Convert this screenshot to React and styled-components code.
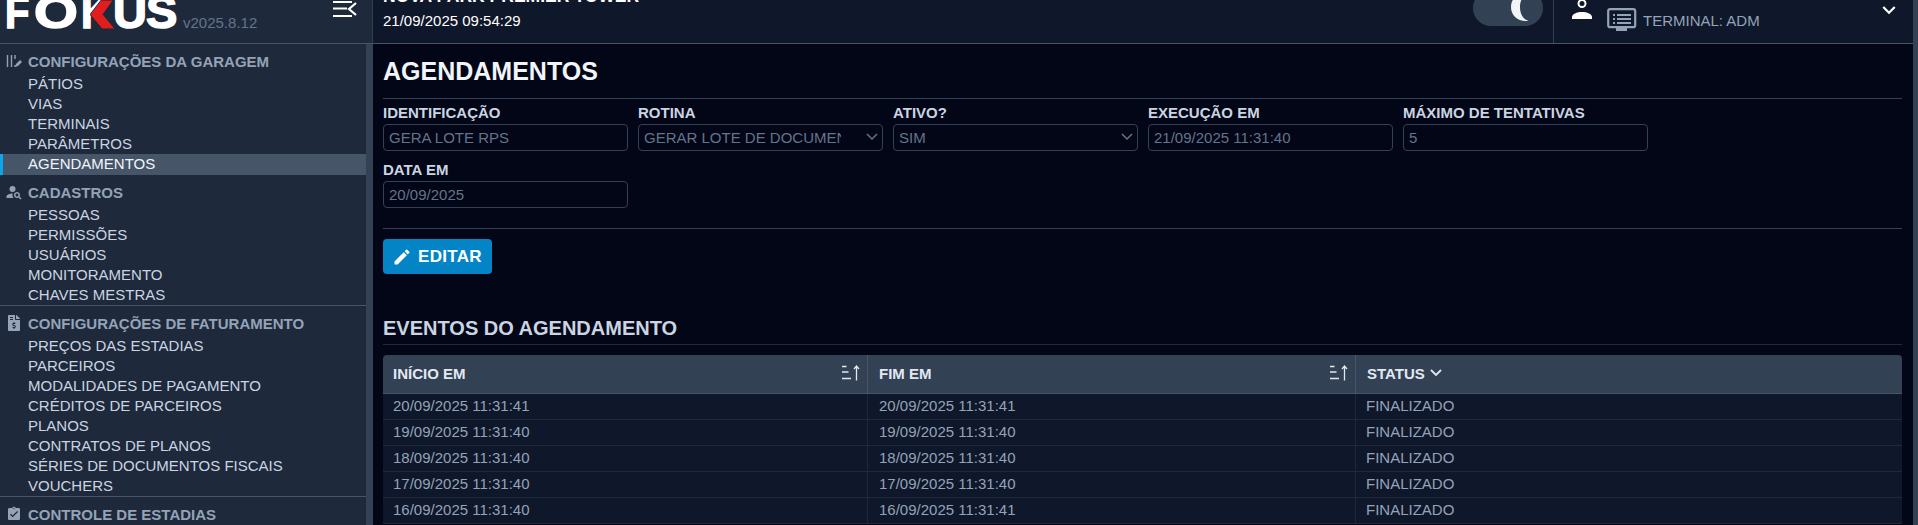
import React from "react";
import styled, { createGlobalStyle } from "styled-components";
import { MdPersonSearch, MdAssignmentTurnedIn, MdEdit, MdExpandMore } from "react-icons/md";
import { FaFileInvoiceDollar } from "react-icons/fa";

const Global = createGlobalStyle`
  html, body { margin: 0; padding: 0; height: 525px; overflow: hidden; background: #020617; }
  * { box-sizing: border-box; }
  body { font-family: "Liberation Sans", Arial, sans-serif; font-size: 15px; }
`;

const Shell = styled.div`
  width: 1918px; height: 525px; display: grid; grid-template-columns: 1913px 5px; overflow: hidden;
`;
const PageScroll = styled.div`background: #334155;`;
const Frame = styled.div`
  display: grid; grid-template-columns: 373px 1fr; grid-template-rows: 44px 1fr; height: 525px; overflow: hidden;
`;
const Brand = styled.div`
  background: #1e293b; border-bottom: 1px solid #475569; border-right: 1px solid #334155;
  display: flex; align-items: flex-end; padding: 0 0 14px 5px; overflow: hidden; position: relative; height: 44px;
`;
const LogoMark = styled.div`
  display: flex; align-items: flex-end; height: 29px; width: 172px; flex: none; position: relative;
`;
const LogoLetter = styled.span`
  display: block; flex: none; width: ${p => p.$w}px; height: 29px;
  font: 700 47px/29px "Liberation Sans", sans-serif; color: #fff; -webkit-text-stroke: 1.6px #fff;
  transform: translateY(-2.6px) scaleX(${p => p.$sx}); transform-origin: left bottom;
`;
const Chevron = styled.svg`position: absolute; left: 85px; top: 0; width: 26px; height: 29px;`;
const Version = styled.span`
  color: #64748b; font-size: 15px; margin-left: 6px; line-height: 16px; margin-bottom: -2px;
`;
const Collapse = styled.svg`position: absolute; right: 15px; top: 0; width: 24px; height: 18px;`;
const TopBar = styled.header`
  background: #0f172a; border-bottom: 1px solid #475569; display: flex; align-items: flex-start; padding-left: 10px; height: 44px; overflow: hidden;
`;
const Place = styled.div`
  color: #fff; font-size: 15px; line-height: 17px; margin-top: -14px; flex: 1;
  b { display: block; font-weight: 700; font-size: 17.5px; margin-bottom: 6px; line-height: 20px; }
`;
const Toggle = styled.div`
  width: 70px; height: 36px; margin-top: -10px; border-radius: 18px; background: #334155; position: relative; flex: none;
`;
const Moon = styled.svg`position: absolute; right: 12px; top: 3px; width: 22px; height: 28px;`;
const UserBox = styled.div`
  margin-left: 10px; width: 360px; height: 43px; border-left: 1px solid #334155; display: flex; align-items: flex-start; padding-left: 17px; flex: none; position: relative;
`;
const PersonIcon = styled.svg`width: 24px; height: 20px; flex: none;`;
const Terminal = styled.div`
  display: flex; align-items: center; gap: 6px; color: #94a3b8; margin: 8px 0 0 12px; font-size: 15px;
`;
const Caret = styled(MdExpandMore)`position: absolute; right: 11px; top: -3px; color: #fff;`;

const SideWrap = styled.aside`
  background: #1e293b; border-right: 7px solid #334155; overflow: hidden; height: 481px;
`;
const Group = styled.section`
  padding-top: 8px; border-bottom: ${p => p.$line ? "1px solid #475569" : "none"};
`;
const GroupTitle = styled.div`
  display: flex; align-items: center; height: 20px; padding: 0 0 2px 6px; color: #94a3b8; font-weight: 700; font-size: 15px; margin-bottom: 2px; white-space: nowrap;
  svg { width: 16px; height: 16px; flex: none; margin-right: 6px; color: #94a3b8; }
`;
const PersonSearch = styled(MdPersonSearch)`
  && { width: 18px; height: 18px; margin: 0 5px 0 -1px; }
`;
const Item = styled.a`
  display: flex; align-items: center; height: ${p => p.$active ? 21 : 20}px; padding: 0 0 2px 28px; color: ${p => p.$active ? "#f1f5f9" : "#cbd5e1"}; font-size: 15px;
  background: ${p => p.$active ? "#475569" : "transparent"};
  border-left: ${p => p.$active ? "3px solid #0ea5e9" : "none"};
  ${p => p.$active ? "padding-left: 25px;" : ""}
`;

const Main = styled.main`
  background: #020617; padding: 0 11px 0 10px; overflow: hidden; height: 481px;
`;
const H1 = styled.h1`
  margin: 0; padding-top: 12px; height: 55px; font-size: 25px; line-height: 30px; font-weight: 700; color: #f1f5f9; border-bottom: 1px solid #334155;
`;
const FormGrid = styled.div`
  display: grid; grid-template-columns: repeat(5, 245px); column-gap: 10px; row-gap: 10px; padding-top: 5px;
`;
const Field = styled.label`display: flex; flex-direction: column;`;
const Label = styled.span`
  color: #cbd5e1; font-weight: 700; font-size: 15px; line-height: 18px; margin-bottom: 2px; height: 18px;
`;
const Input = styled.div`
  height: 27px; border: 1px solid #334155; border-radius: 4px; background: #020617; color: #64748b; font-size: 15px;
  padding: 0 ${p => p.$select ? 41 : 6}px 0 5px;
  display: flex; align-items: center; position: relative; white-space: nowrap; overflow: hidden;
`;
const InputText = styled.span`overflow: hidden; display: block; flex: 1;`;
const SelectArrow = styled.svg`position: absolute; right: 4px; top: 8px; width: 12px; height: 8px; fill: none; stroke: #64748b; stroke-width: 1.5;`;
const Rule = styled.hr`
  border: 0; border-top: 1px solid #334155; margin: 20px 0 10px;
`;
const EditButton = styled.button`
  width: 109px; height: 35px; background: #0284c7; color: #fff; border: 0; border-radius: 4px; font: 700 17px "Liberation Sans", sans-serif; letter-spacing: .3px;
  display: flex; align-items: center; padding: 0 0 0 9px; gap: 6px;
`;
const H2 = styled.h2`
  margin: 42px 0 0; height: 29px; font-size: 20px; line-height: 24px; font-weight: 700; color: #cbd5e1; border-bottom: 1px solid #1e293b;
`;
const Table = styled.div`
  margin-top: 10px; border-radius: 4px 4px 0 0; overflow: hidden; width: 1519px; font-size: 15px;
`;
const Row = styled.div`
  display: grid; grid-template-columns: 485px 488px 1fr; height: ${p => p.$head ? 39 : 26}px;
  background: ${p => p.$head ? "#334155" : "#0f172a"};
  border-bottom: 1px solid ${p => p.$head ? "#475569" : "#1e293b"};
`;
const Cell = styled.div`
  display: flex; align-items: center; padding: 0 10px 2px; color: #94a3b8; border-right: 1px solid #1e293b;
  &:nth-child(2) { padding-left: 11px; }
  &:last-child { border-right: 0; }
`;
const HeadCell = styled.div`
  display: flex; align-items: center; padding: 0 6px 2px 10px; color: #e2e8f0; font-weight: 700; border-right: 1px solid #475569;
  &:not(:first-child) { padding-left: 11px; }
  &:last-child { border-right: 0; }
  svg { flex: none; }
`;
const Spacer = styled.span`flex: 1;`;
const SortIcon = styled.svg`width: 20px; height: 16px;`;
const StatusCaret = styled.svg`width: 12px; height: 8px; margin-left: 5px; fill: none; stroke: #e2e8f0; stroke-width: 1.8;`;

const Sort = () => (
  <SortIcon viewBox="0 0 20 16" fill="none" stroke="#e2e8f0" strokeWidth="1.3">
    <path d="M1 1.5h4.5M1 7h6.5M1 13.5h9" />
    <path d="M15.5 15.5V1M13 4 15.5 1 18 4" />
  </SortIcon>
);

const GarageIcon = () => (
  <svg viewBox="0 0 16 16" fill="none" stroke="currentColor" strokeWidth="1.4">
    <path d="M1.5 2v12M5.5 2v12M9 2v4M9 12v2" />
    <path d="M9 14l1-3 4-4 2 2-4 4z" fill="currentColor" stroke="none" />
  </svg>
);

const data = [
  ["20/09/2025 11:31:41", "20/09/2025 11:31:41"],
  ["19/09/2025 11:31:40", "19/09/2025 11:31:40"],
  ["18/09/2025 11:31:40", "18/09/2025 11:31:40"],
  ["17/09/2025 11:31:40", "17/09/2025 11:31:40"],
  ["16/09/2025 11:31:40", "16/09/2025 11:31:41"],
];

export default function App() {
  return (
    <Shell>
      <Global />
      <Frame>
        <Brand>
          <LogoMark>
            <LogoLetter $w={29} $sx={0.85}>F</LogoLetter>
            <LogoLetter $w={47} $sx={1.2}>O</LogoLetter>
            <LogoLetter $w={32} $sx={0.9}>K</LogoLetter>
            <LogoLetter $w={33} $sx={1}>U</LogoLetter>
            <LogoLetter $w={31} $sx={1}>S</LogoLetter>
            <Chevron viewBox="0 0 28 29"><path d="M25-1H12L0 14.5 13 30h14L14 14.5z" fill="#e11d1d" stroke="#1e293b" strokeWidth="1" /></Chevron>
          </LogoMark>
          <Version>v2025.8.12</Version>
          <Collapse viewBox="0 0 24 18" fill="none" stroke="#fff" strokeWidth="2.2">
            <path d="M0 2h19M0 8.5h14M0 16h19M23 3l-7 6 7 6" />
          </Collapse>
        </Brand>
        <TopBar>
          <Place>
            <b>NOVA PARK PREMIER TOWER</b>
            21/09/2025 09:54:29
          </Place>
          <Toggle>
            <Moon viewBox="0 0 22 28"><path d="M17 0C8 0 2 6 2 14s6 14 15 14c1 0 2 0 2-.5C14 26 11 21 11 14S14 3 19 .5c0-.5-1-.5-2-.5z" fill="#f1f5f9" /></Moon>
          </Toggle>
          <UserBox>
            <PersonIcon viewBox="0 0 24 20" fill="none">
              <circle cx="11" cy="3.5" r="3.5" stroke="#fff" strokeWidth="2" />
              <path d="M1 19v-2c0-3 5-5 10-5s10 2 10 5v2z" fill="#fff" />
            </PersonIcon>
            <Terminal>
              <svg width="30" height="24" viewBox="0 0 30 24" fill="none">
                <rect x="1.2" y="1.2" width="27" height="18" rx="2" stroke="#94a3b8" strokeWidth="2.2" />
                <path d="M9 20h11v3H9z" fill="#94a3b8" />
                <path d="M6 7h2M10 7h14M6 11h2M10 11h14M6 15h2M10 15h14" stroke="#94a3b8" strokeWidth="1.8" />
              </svg>
              TERMINAL: ADM
            </Terminal>
            <Caret size={26} />
          </UserBox>
        </TopBar>
        <SideWrap>
          <Group>
            <GroupTitle><GarageIcon />CONFIGURAÇÕES DA GARAGEM</GroupTitle>
            <Item>PÁTIOS</Item>
            <Item>VIAS</Item>
            <Item>TERMINAIS</Item>
            <Item>PARÂMETROS</Item>
            <Item $active>AGENDAMENTOS</Item>
          </Group>
          <Group $line>
            <GroupTitle><PersonSearch />CADASTROS</GroupTitle>
            <Item>PESSOAS</Item>
            <Item>PERMISSÕES</Item>
            <Item>USUÁRIOS</Item>
            <Item>MONITORAMENTO</Item>
            <Item>CHAVES MESTRAS</Item>
          </Group>
          <Group $line>
            <GroupTitle><FaFileInvoiceDollar />CONFIGURAÇÕES DE FATURAMENTO</GroupTitle>
            <Item>PREÇOS DAS ESTADIAS</Item>
            <Item>PARCEIROS</Item>
            <Item>MODALIDADES DE PAGAMENTO</Item>
            <Item>CRÉDITOS DE PARCEIROS</Item>
            <Item>PLANOS</Item>
            <Item>CONTRATOS DE PLANOS</Item>
            <Item>SÉRIES DE DOCUMENTOS FISCAIS</Item>
            <Item>VOUCHERS</Item>
          </Group>
          <Group>
            <GroupTitle><MdAssignmentTurnedIn />CONTROLE DE ESTADIAS</GroupTitle>
          </Group>
        </SideWrap>
        <Main>
          <H1>AGENDAMENTOS</H1>
          <FormGrid>
            <Field><Label>IDENTIFICAÇÃO</Label><Input><InputText>GERA LOTE RPS</InputText></Input></Field>
            <Field><Label>ROTINA</Label><Input $select><InputText>GERAR LOTE DE DOCUMENTOS FISCAIS</InputText><SelectArrow viewBox="0 0 12 8"><path d="M1 1l5 5 5-5" /></SelectArrow></Input></Field>
            <Field><Label>ATIVO?</Label><Input $select><InputText>SIM</InputText><SelectArrow viewBox="0 0 12 8"><path d="M1 1l5 5 5-5" /></SelectArrow></Input></Field>
            <Field><Label>EXECUÇÃO EM</Label><Input><InputText>21/09/2025 11:31:40</InputText></Input></Field>
            <Field><Label>MÁXIMO DE TENTATIVAS</Label><Input><InputText>5</InputText></Input></Field>
            <Field><Label>DATA EM</Label><Input><InputText>20/09/2025</InputText></Input></Field>
          </FormGrid>
          <Rule />
          <EditButton><MdEdit size={20} />EDITAR</EditButton>
          <H2>EVENTOS DO AGENDAMENTO</H2>
          <Table>
            <Row $head>
              <HeadCell>INÍCIO EM<Spacer /><Sort /></HeadCell>
              <HeadCell>FIM EM<Spacer /><Sort /></HeadCell>
              <HeadCell>STATUS<StatusCaret viewBox="0 0 12 8"><path d="M1 1l5 5 5-5" /></StatusCaret></HeadCell>
            </Row>
            {data.map(([a, b]) => (
              <Row key={a}>
                <Cell>{a}</Cell>
                <Cell>{b}</Cell>
                <Cell>FINALIZADO</Cell>
              </Row>
            ))}
          </Table>
        </Main>
      </Frame>
      <PageScroll />
    </Shell>
  );
}
